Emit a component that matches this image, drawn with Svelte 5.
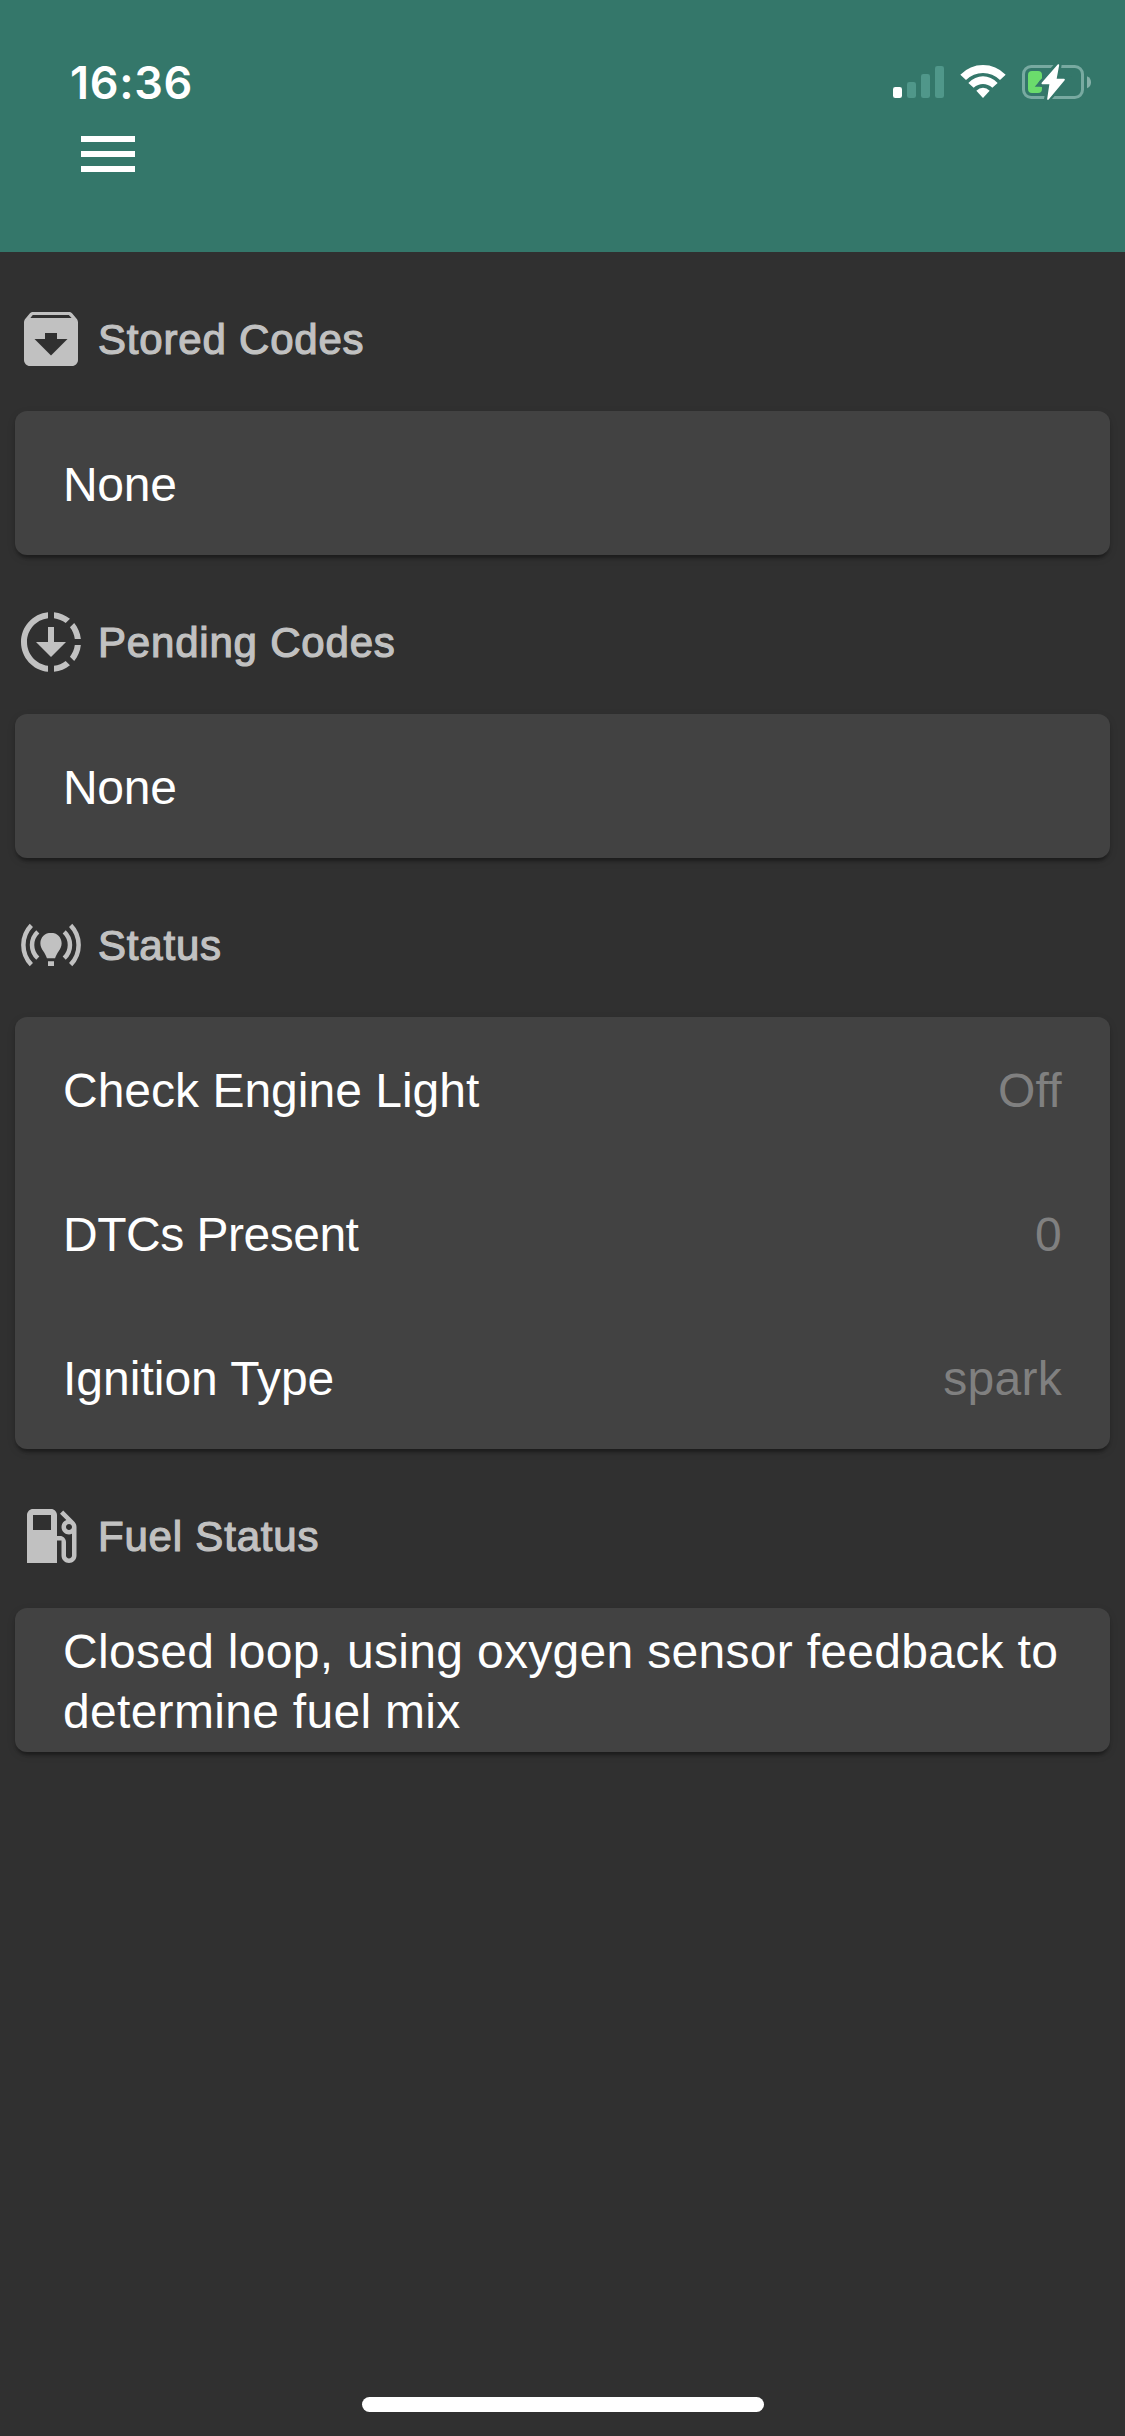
<script>
  const archive =
    'M20.54 5.23l-1.39-1.68C18.88 3.21 18.47 3 18 3H6c-.47 0-.88.21-1.16.55L3.46 5.23C3.17 5.57 3 6.02 3 6.5V19c0 1.1.9 2 2 2h14c1.1 0 2-.9 2-2V6.5c0-.48-.17-.93-.46-1.27zM12 17.5L6.5 12H10v-2h4v2h3.5L12 17.5zM5.12 5l.81-1h12l.94 1H5.12z';
  const downloading =
    'M18.32 4.26C16.84 3.05 15.01 2.25 13 2.05v2.02c1.46.18 2.79.76 3.9 1.62l1.42-1.43zM19.93 11h2.02c-.2-2.01-1-3.84-2.21-5.32L18.31 7.1c.86 1.11 1.44 2.44 1.62 3.9zM18.31 16.9l1.43 1.43c1.21-1.48 2.01-3.32 2.21-5.32h-2.02c-.18 1.45-.76 2.78-1.62 3.89zM13 19.93v2.02c2.01-.2 3.84-1 5.32-2.21l-1.43-1.43c-1.1.86-2.43 1.44-3.89 1.62zM13 12V7h-2v5H7l5 5 5-5h-4zm-2 7.93v2.02c-5.05-.5-9-4.76-9-9.95s3.95-9.45 9-9.95v2.02C7.05 4.56 4 7.92 4 12s3.05 7.44 7 7.93z';
  const fuel =
    'M19.77 7.23l.01-.01-3.72-3.72L15 4.56l2.11 2.11c-.94.36-1.61 1.26-1.61 2.33 0 1.38 1.12 2.5 2.5 2.5.36 0 .69-.08 1-.21v7.21c0 .55-.45 1-1 1s-1-.45-1-1V14c0-1.1-.9-2-2-2h-1V5c0-1.1-.9-2-2-2H6c-1.1 0-2 .9-2 2v16h10v-7.5h1.5v5c0 1.38 1.12 2.5 2.5 2.5s2.5-1.12 2.5-2.5V9c0-.69-.28-1.32-.73-1.77zM12 10H6V5h6v5zm6 0c-.55 0-1-.45-1-1s.45-1 1-1 1 .45 1 1-.45 1-1 1z';
  const bulb =
    'M12 7.95c-2 0-3.55 1.55-3.55 3.5 0 1.1.45 1.85 1 2.65.45.7.85 1.4 1.2 2.3h2.7c.35-.9.75-1.6 1.2-2.3.55-.8 1-1.55 1-2.65 0-1.95-1.55-3.5-3.55-3.5zM11 17.4h2V19h-2z';
  const waves =
    'M5.45 5.45A9.4 9.4 0 0 0 5.45 18.55M18.55 5.45A9.4 9.4 0 0 1 18.55 18.55M7.6 7.6A6 6 0 0 0 7.6 16.4M16.4 7.6A6 6 0 0 1 16.4 16.4';

  // tracking: letter spacing of the label, in pixels
  const sections = [
    { title: 'Stored Codes', icon: archive, rows: [{ label: 'None', tracking: -0.3 }] },
    { title: 'Pending Codes', icon: downloading, rows: [{ label: 'None', tracking: -0.3 }] },
    {
      title: 'Status',
      icon: bulb,
      strokes: waves,
      rows: [
        { label: 'Check Engine Light', value: 'Off', tracking: 0 },
        { label: 'DTCs Present', value: '0', tracking: -0.5 },
        { label: 'Ignition Type', value: 'spark', tracking: 0 },
      ],
    },
    {
      title: 'Fuel Status',
      icon: fuel,
      rows: [
        {
          label: 'Closed loop, using oxygen sensor feedback to determine fuel mix',
          tracking: 0.3,
        },
      ],
    },
  ];
</script>

<div class="screen">
  <header>
    <div class="statusbar">
      <span class="time">16:36</span>
      <svg class="indicators" viewBox="60 60 615 132" aria-hidden="true">
        <g fill="#fff">
          <rect x="69" y="141" width="27" height="33" rx="7" />
          <g fill="#50978a">
            <rect x="111" y="126" width="27" height="48" rx="7" />
            <rect x="153" y="102" width="27" height="72" rx="7" />
            <rect x="195" y="78" width="27" height="96" rx="7" />
          </g>
          <path d="M271 104Q300 75 339 75T407 104L390 120Q368 99 339 99T288 120z" />
          <path d="M295 129Q315 109 339 109T383 129L367 143Q354 132 339 132T311 143z" />
          <path d="M319 152Q328 143 339 143T359 152L339 174z" />
        </g>
        <rect x="460.500" y="79.500" width="177" height="93" rx="23" fill="none" stroke="#78aaa1" stroke-width="9" />
        <path d="M651 109Q663 114 663 127T651 145z" fill="#85b0a8" />
        <path d="M486 93H504Q516 93 516 105V116Q505 124 505 131T516 141V147Q516 159 504 159H486Q474 159 474 147V105Q474 93 486 93z" fill="#6bdc6c" />
        <path class="bolt-gap" d="M565 73L516 130H541L532 178L583 119H558z" />
        <path class="bolt" d="M565 75L517 130H541L534 177L582 119H557z" />
      </svg>
    </div>
    <button class="menu" aria-label="Menu">
      <svg viewBox="0 0 24 24"><path d="M3 18h18v-2H3v2zm0-5h18v-2H3v2zm0-7v2h18V6H3z" /></svg>
    </button>
  </header>

  <main>
    {#each sections as section}
      <section>
        <h2>
          <svg viewBox="0 0 24 24" aria-hidden="true">
            <path d={section.icon} />
            {#if section.strokes}<path class="waves" d={section.strokes} />{/if}
          </svg>
          <span>{section.title}</span>
        </h2>
        <div class="card">
          {#each section.rows as row}
            <div class="row">
              <span class="label" style:letter-spacing="{row.tracking}px">{row.label}</span>
              {#if row.value}<span class="value">{row.value}</span>{/if}
            </div>
          {/each}
        </div>
      </section>
    {/each}
  </main>
  <div class="home"></div>
</div>

<style>
  :global(body) {
    margin: 0;
    background: #303030;
  }
  .screen {
    box-sizing: border-box;
    width: 1125px;
    height: 2436px;
    display: flex;
    flex-direction: column;
    background: #303030;
    color: #fff;
    font-family: 'Liberation Sans', Arial, sans-serif;
    overflow: hidden;
  }
  header {
    box-sizing: border-box;
    height: 252px;
    padding-top: 60px;
    background: #34776a;
  }
  .statusbar {
    display: flex;
    justify-content: space-between;
    height: 58px;
    padding: 0 30px 0 70px;
  }
  .time {
    font: 560 45px/46px Inter, sans-serif;
    letter-spacing: 0.7px;
  }
  .indicators {
    width: 205px;
    height: 44px;
  }
  .bolt-gap {
    fill: #34776a;
    stroke: #34776a;
    stroke-width: 20;
  }
  .bolt {
    fill: #fff;
    stroke: #fff;
    stroke-width: 5;
    stroke-linejoin: round;
  }
  .menu {
    display: block;
    width: 72px;
    height: 72px;
    margin-left: 72px;
    padding: 0;
    border: 0;
    background: none;
  }
  .menu svg {
    display: block;
    fill: #fff;
  }
  main {
    flex: 1;
    padding: 0 15px;
  }
  h2 {
    display: flex;
    align-items: center;
    gap: 11px;
    height: 72px;
    margin: 0;
    padding: 51px 0 36px;
    color: #c1c1c1;
    font-size: 42px;
    font-weight: 400;
    letter-spacing: 0.8px;
    -webkit-text-stroke: 1.2px #c1c1c1;
  }
  h2 span {
    padding-top: 2px;
  }
  h2 svg {
    width: 72px;
    height: 72px;
    fill: #c1c1c1;
    -webkit-text-stroke: 0;
  }
  .waves {
    fill: none;
    stroke: #c1c1c1;
    stroke-width: 1.5;
  }
  .card {
    border-radius: 12px;
    background: #424242;
    box-shadow:
      0 6px 3px -3px rgba(0, 0, 0, 0.2),
      0 3px 3px rgba(0, 0, 0, 0.14),
      0 3px 9px rgba(0, 0, 0, 0.12);
  }
  .row {
    box-sizing: border-box;
    display: flex;
    align-items: center;
    justify-content: space-between;
    height: 144px;
    padding: 4px 48px 0;
    font-size: 48px;
    line-height: 60px;
    letter-spacing: 0.3px;
  }
  .value {
    color: #808080;
  }
  .home {
    width: 402px;
    height: 15px;
    margin: 0 auto 24px;
    border-radius: 8px;
    background: #fff;
  }
</style>
